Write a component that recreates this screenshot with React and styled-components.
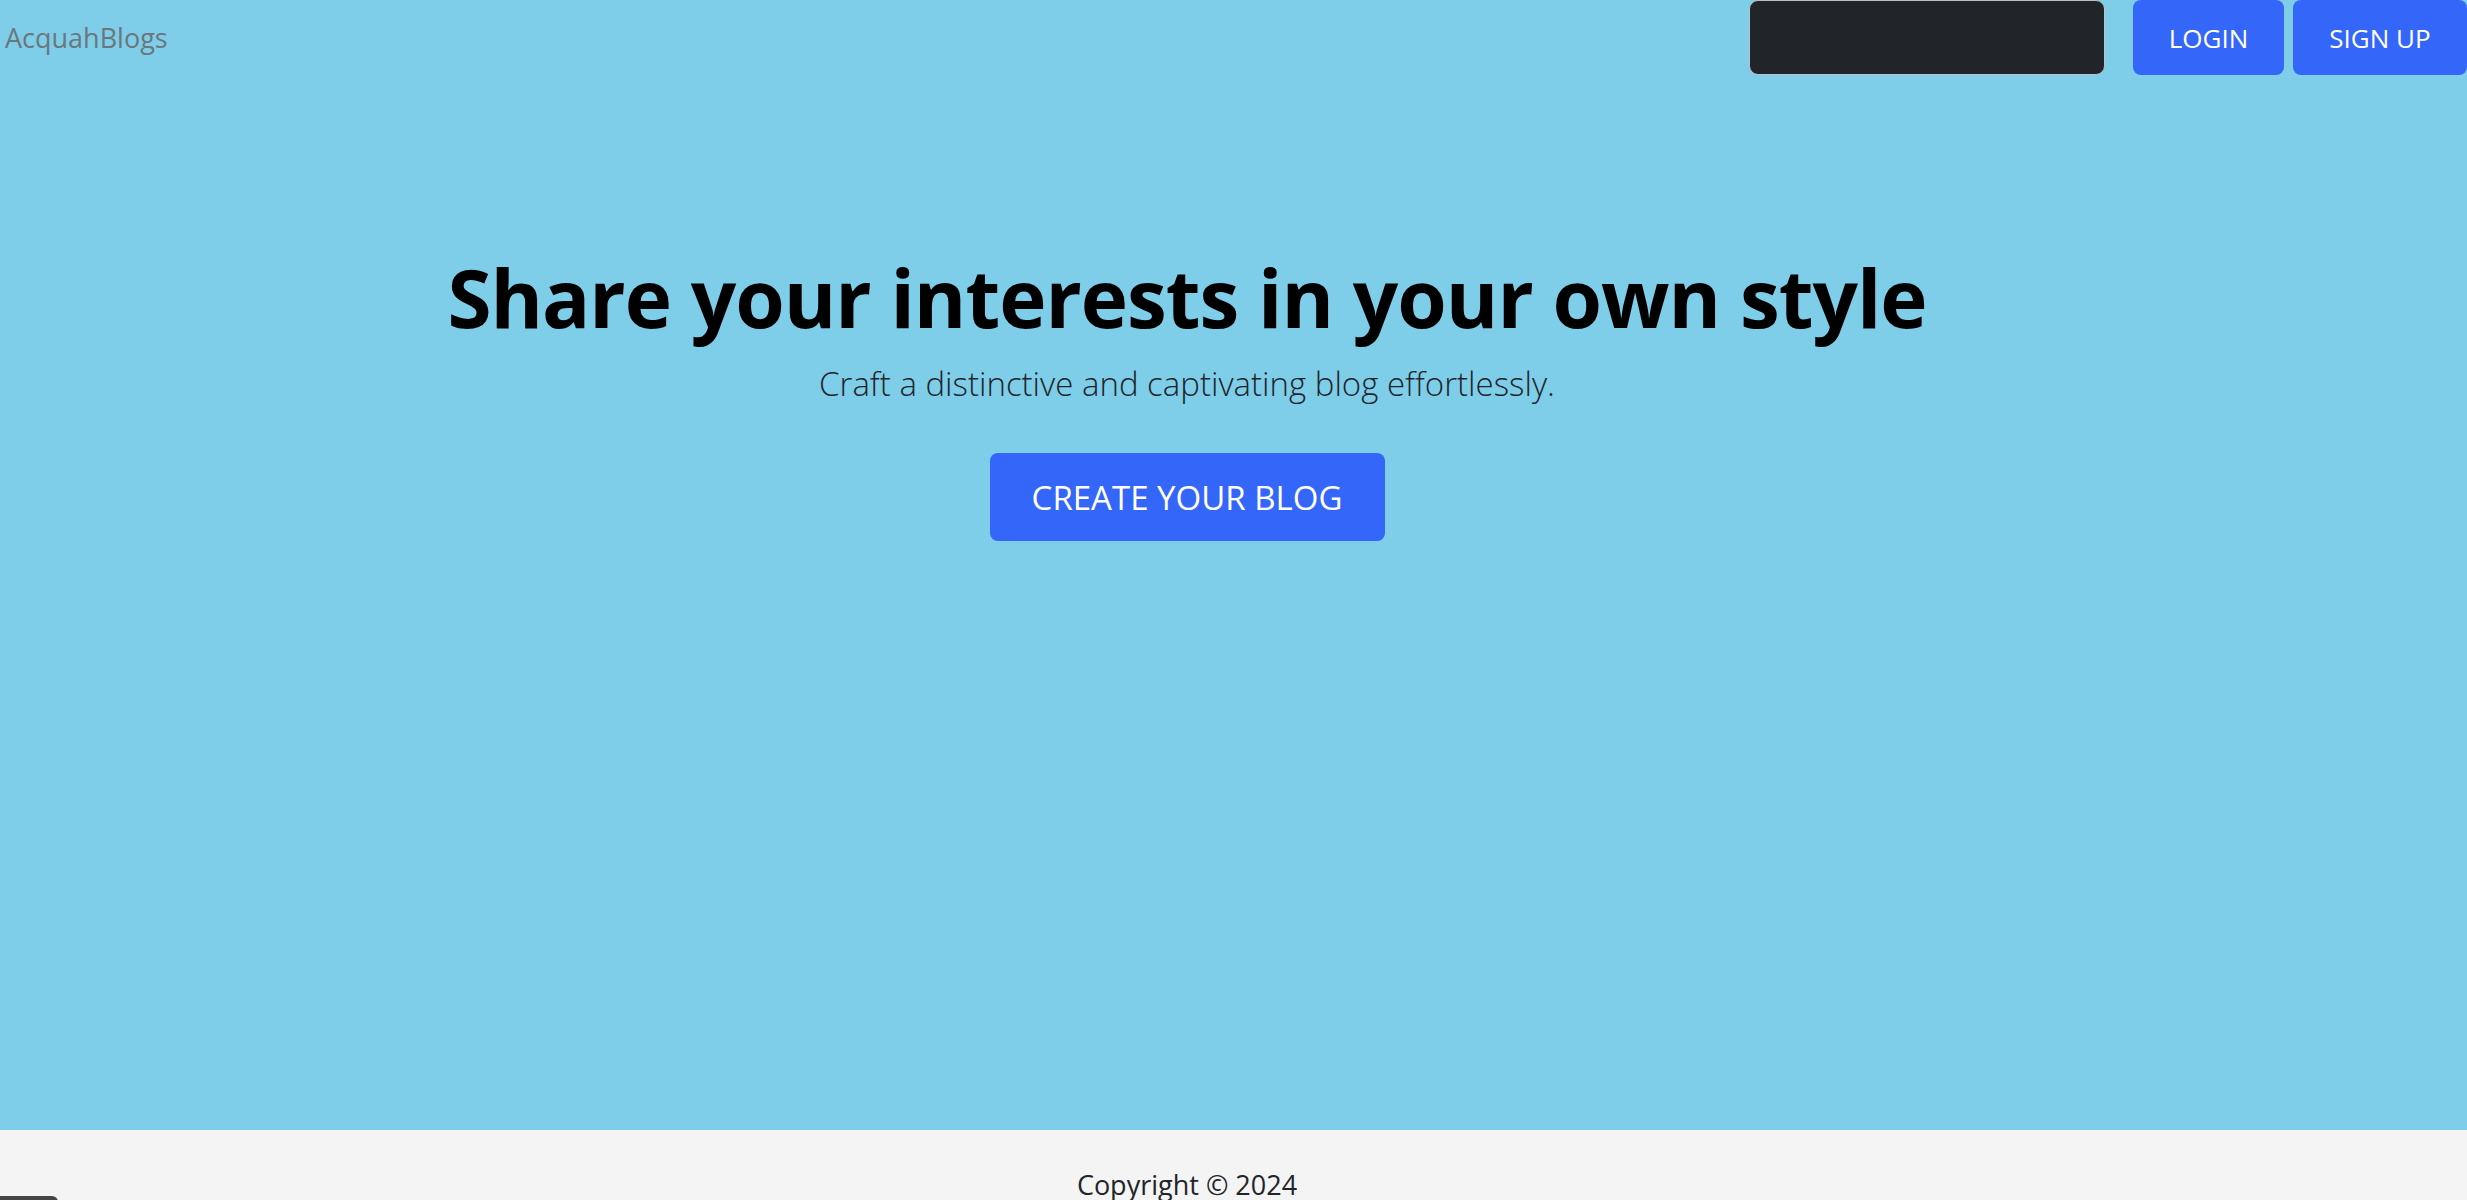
import styled, { createGlobalStyle } from "styled-components"

const GlobalStyle = createGlobalStyle`
    html, body{
        margin: 0;
        padding: 0;
        overflow: hidden;
    }
    body{
        font-family: "Open Sans", "Noto Sans", sans-serif;
        background: #f4f4f4;
        color: #212529;
    }
    *{
        box-sizing: border-box;
    }
`

export default function App(){
    return(
        <>
        <GlobalStyle/>
        <Page>
            <Navbar>
                <Brand>AcquahBlogs</Brand>
                <NavRight>
                    <SearchBox/>
                    <NavButton>LOGIN</NavButton>
                    <NavButton wide>SIGN UP</NavButton>
                </NavRight>
            </Navbar>
            <Hero>
                <Title>Share your interests in your own style</Title>
                <Lead>Craft a distinctive and captivating blog effortlessly.</Lead>
                <CreateButton>CREATE YOUR BLOG</CreateButton>
            </Hero>
            <Footer>
                <p>Copyright © 2024</p>
            </Footer>
            <CornerTab/>
        </Page>
        </>
    )
}

const Page = styled.div`
    position: relative;
    width: 100%;
    height: 1200px;
    display: flex;
    flex-direction: column;
    background: #7ecde9;
`
const Navbar = styled.nav`
    flex-shrink: 0;
    height: 75px;
    display: flex;
    justify-content: space-between;
    align-items: center;
`
const Brand = styled.span`
    font-size: 27px;
    color: #6b777c;
    padding-left: 5px;
    margin-top: -1px;
`
const NavRight = styled.div`
    display: flex;
    align-items: stretch;
    height: 75px;
    gap: 9px;
`
const SearchBox = styled.div`
    width: 356px;
    background: #212428;
    border: 1px solid #b9c2c8;
    border-radius: 9px;
    margin-right: 19px;
`
const NavButton = styled.button`
    width: ${p => p.wide ? "174px" : "151px"};
    border: none;
    border-radius: 8px;
    background: #3366f9;
    color: #fff;
    font-family: "Open Sans", sans-serif;
    font-size: 26px;
    padding: 0;
`
const Hero = styled.section`
    flex-shrink: 0;
    height: 1055px;
    width: 2374px;
    display: flex;
    flex-direction: column;
    align-items: center;
    padding-top: 172px;
`
const Title = styled.h1`
    margin: 0;
    font-size: 80px;
    line-height: 100px;
    font-weight: 700;
    color: #000;
    letter-spacing: -1px;
`
const Lead = styled.p`
    margin: 14px 0 0 0;
    font-size: 33px;
    line-height: 46px;
    font-weight: 300;
    color: #212529;
`
const CreateButton = styled.button`
    margin-top: 46px;
    width: 395px;
    height: 88px;
    border: none;
    border-radius: 8px;
    background: #3366f9;
    color: #fff;
    font-family: "Open Sans", sans-serif;
    font-size: 33px;
`
const Footer = styled.footer`
    flex: 1;
    width: 2374px;
    background: #f4f4f4;
    display: flex;
    justify-content: center;
    box-shadow: 93px 0 0 #f4f4f4;
    p{
        margin: 36px 0 0 0;
        font-size: 27px;
        line-height: 37px;
        color: #212529;
    }
`
const CornerTab = styled.div`
    position: absolute;
    left: 0;
    bottom: -10px;
    width: 58px;
    height: 14px;
    background: #454545;
    border-top-right-radius: 6px;
`
